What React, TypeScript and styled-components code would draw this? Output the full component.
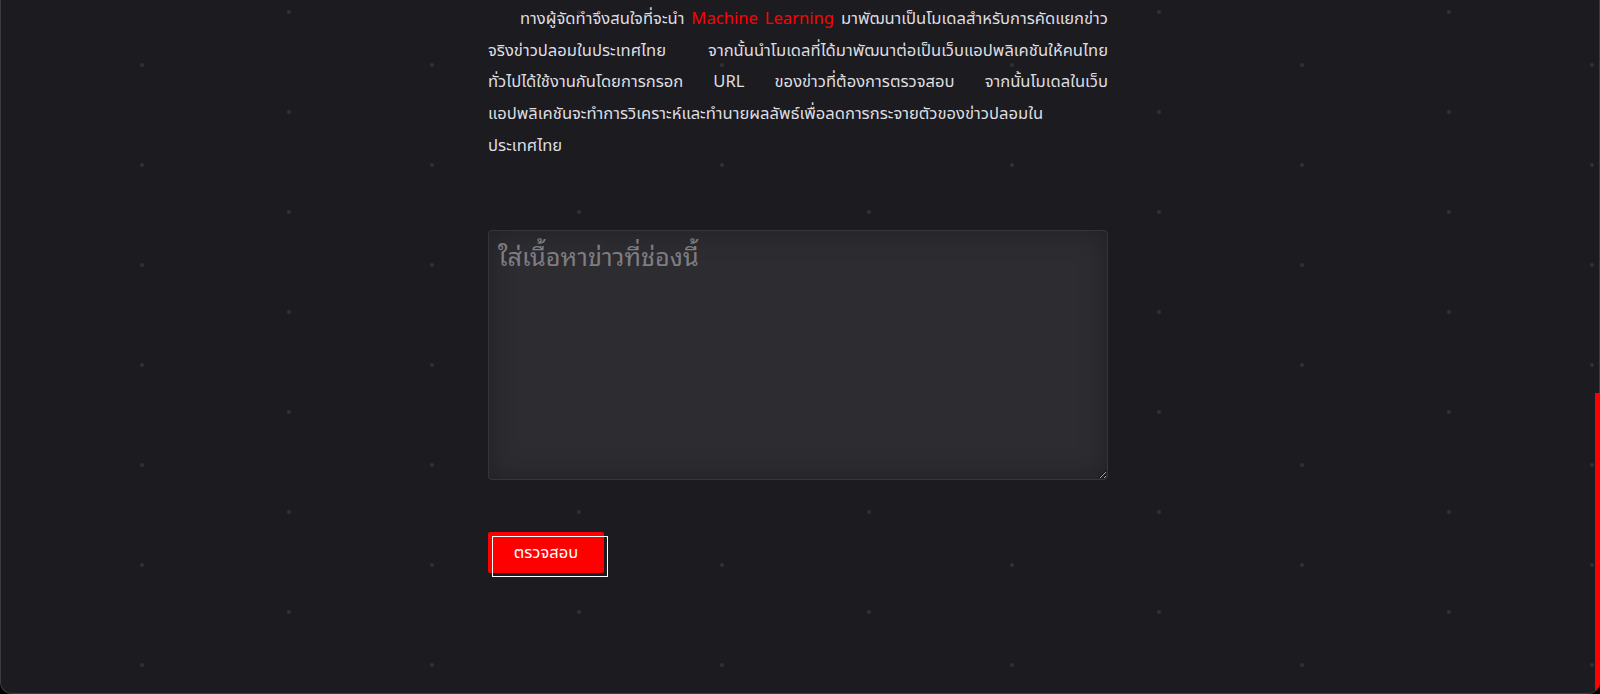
import React, { useLayoutEffect, useRef } from "react";
import styled, { createGlobalStyle } from "styled-components";

const GlobalStyle = createGlobalStyle`
  html, body {
    margin: 0;
    padding: 0;
    height: 100%;
    background: #000;
  }
  #root {
    height: 100%;
  }
`;

const Frame = styled.div`
  display: flex;
  height: 100vh;
  box-sizing: border-box;
  border: 1px solid #3b3b42;
  border-top: none;
  border-right: none;
  border-radius: 0 0 12px 12px;
  overflow: hidden;
  background-color: #1b1b20;
  background-image: radial-gradient(circle, #303037 1.5px, transparent 2.3px),
    radial-gradient(circle, #303037 1.5px, transparent 2.3px);
  background-size: 290px 100px;
  background-position: 143px -38px, -4px 15px;
`;

const Scroller = styled.main`
  flex: 1;
  min-width: 0;
  height: 100%;
  overflow-y: auto;
  scrollbar-width: none;
  font-family: "Noto Sans Thai", "Noto Sans", sans-serif;

  &::-webkit-scrollbar {
    display: none;
  }
`;

const ScrollTrack = styled.div`
  flex: 0 0 5px;
  display: flex;
  flex-direction: column;
  justify-content: flex-end;
  box-shadow: inset -1px 0 0 #3b3b42;
`;

const ScrollThumb = styled.div`
  height: 300px;
  background: #ff0000;
`;

const Intro = styled.header`
  height: 914px;
`;

const Content = styled.section`
  width: 620px;
  margin: 0 auto;
  padding-bottom: 120px;
  display: flex;
  flex-direction: column;
`;

const Paragraph = styled.p`
  margin: 0;
  color: #dedee0;
  font-size: 16.6px;
  line-height: 31.7px;
  text-align: justify;
  text-align-last: justify;
  text-indent: 32px;
  white-space: nowrap;
`;

const Highlight = styled.span`
  color: #ff0000;
`;

const NewsInput = styled.textarea`
  margin-top: 68px;
  width: 620px;
  height: 250px;
  box-sizing: border-box;
  padding: 3px 9px;
  border: 1px solid #35353a;
  border-radius: 4px;
  background: #2d2c31;
  box-shadow: inset 0 0 28px rgba(0, 0, 0, 0.28);
  color: #e0e0e0;
  font-family: "Noto Sans Thai Looped", "Noto Sans Thai", sans-serif;
  font-size: 25.3px;
  resize: vertical;
  outline: none;

  &::placeholder {
    color: #7e7d82;
  }
`;

const CheckButton = styled.button`
  position: relative;
  align-self: flex-start;
  margin-top: 52px;
  width: 116px;
  height: 41px;
  border: none;
  border-radius: 2px;
  background: #ff0000;
  color: #fff;
  font-family: "Noto Sans Thai", "Noto Sans", sans-serif;
  font-size: 16.5px;
  cursor: pointer;

  &::after {
    content: "";
    position: absolute;
    left: 4px;
    top: 4px;
    width: 100%;
    height: 100%;
    box-sizing: border-box;
    border: 1px solid #fff;
    pointer-events: none;
  }
`;

export default function App() {
  const ref = useRef<HTMLElement>(null);

  useLayoutEffect(() => {
    if (ref.current) {
      ref.current.scrollTop = ref.current.scrollHeight;
    }
  }, []);

  return (
    <>
      <GlobalStyle />
      <Frame>
        <Scroller ref={ref}>
          <Intro />
          <Content>
            <Paragraph>
              ทางผู้จัดทำจึงสนใจที่จะนำ <Highlight>Machine Learning</Highlight> มาพัฒนาเป็นโมเดลสำหรับการคัดแยกข่าว
              <br />
              จริงข่าวปลอมในประเทศไทย จากนั้นนำโมเดลที่ได้มาพัฒนาต่อเป็นเว็บแอปพลิเคชันให้คนไทย
              <br />
              ทั่วไปได้ใช้งานกันโดยการกรอก URL ของข่าวที่ต้องการตรวจสอบ จากนั้นโมเดลในเว็บ
              <br />
              แอปพลิเคชันจะทำการวิเคราะห์และทำนายผลลัพธ์เพื่อลดการกระจายตัวของข่าวปลอมใน
              <br />
              ประเทศไทย
            </Paragraph>
            <NewsInput placeholder="ใส่เนื้อหาข่าวที่ช่องนี้" />
            <CheckButton type="button">ตรวจสอบ</CheckButton>
          </Content>
        </Scroller>
        <ScrollTrack>
          <ScrollThumb />
        </ScrollTrack>
      </Frame>
    </>
  );
}
